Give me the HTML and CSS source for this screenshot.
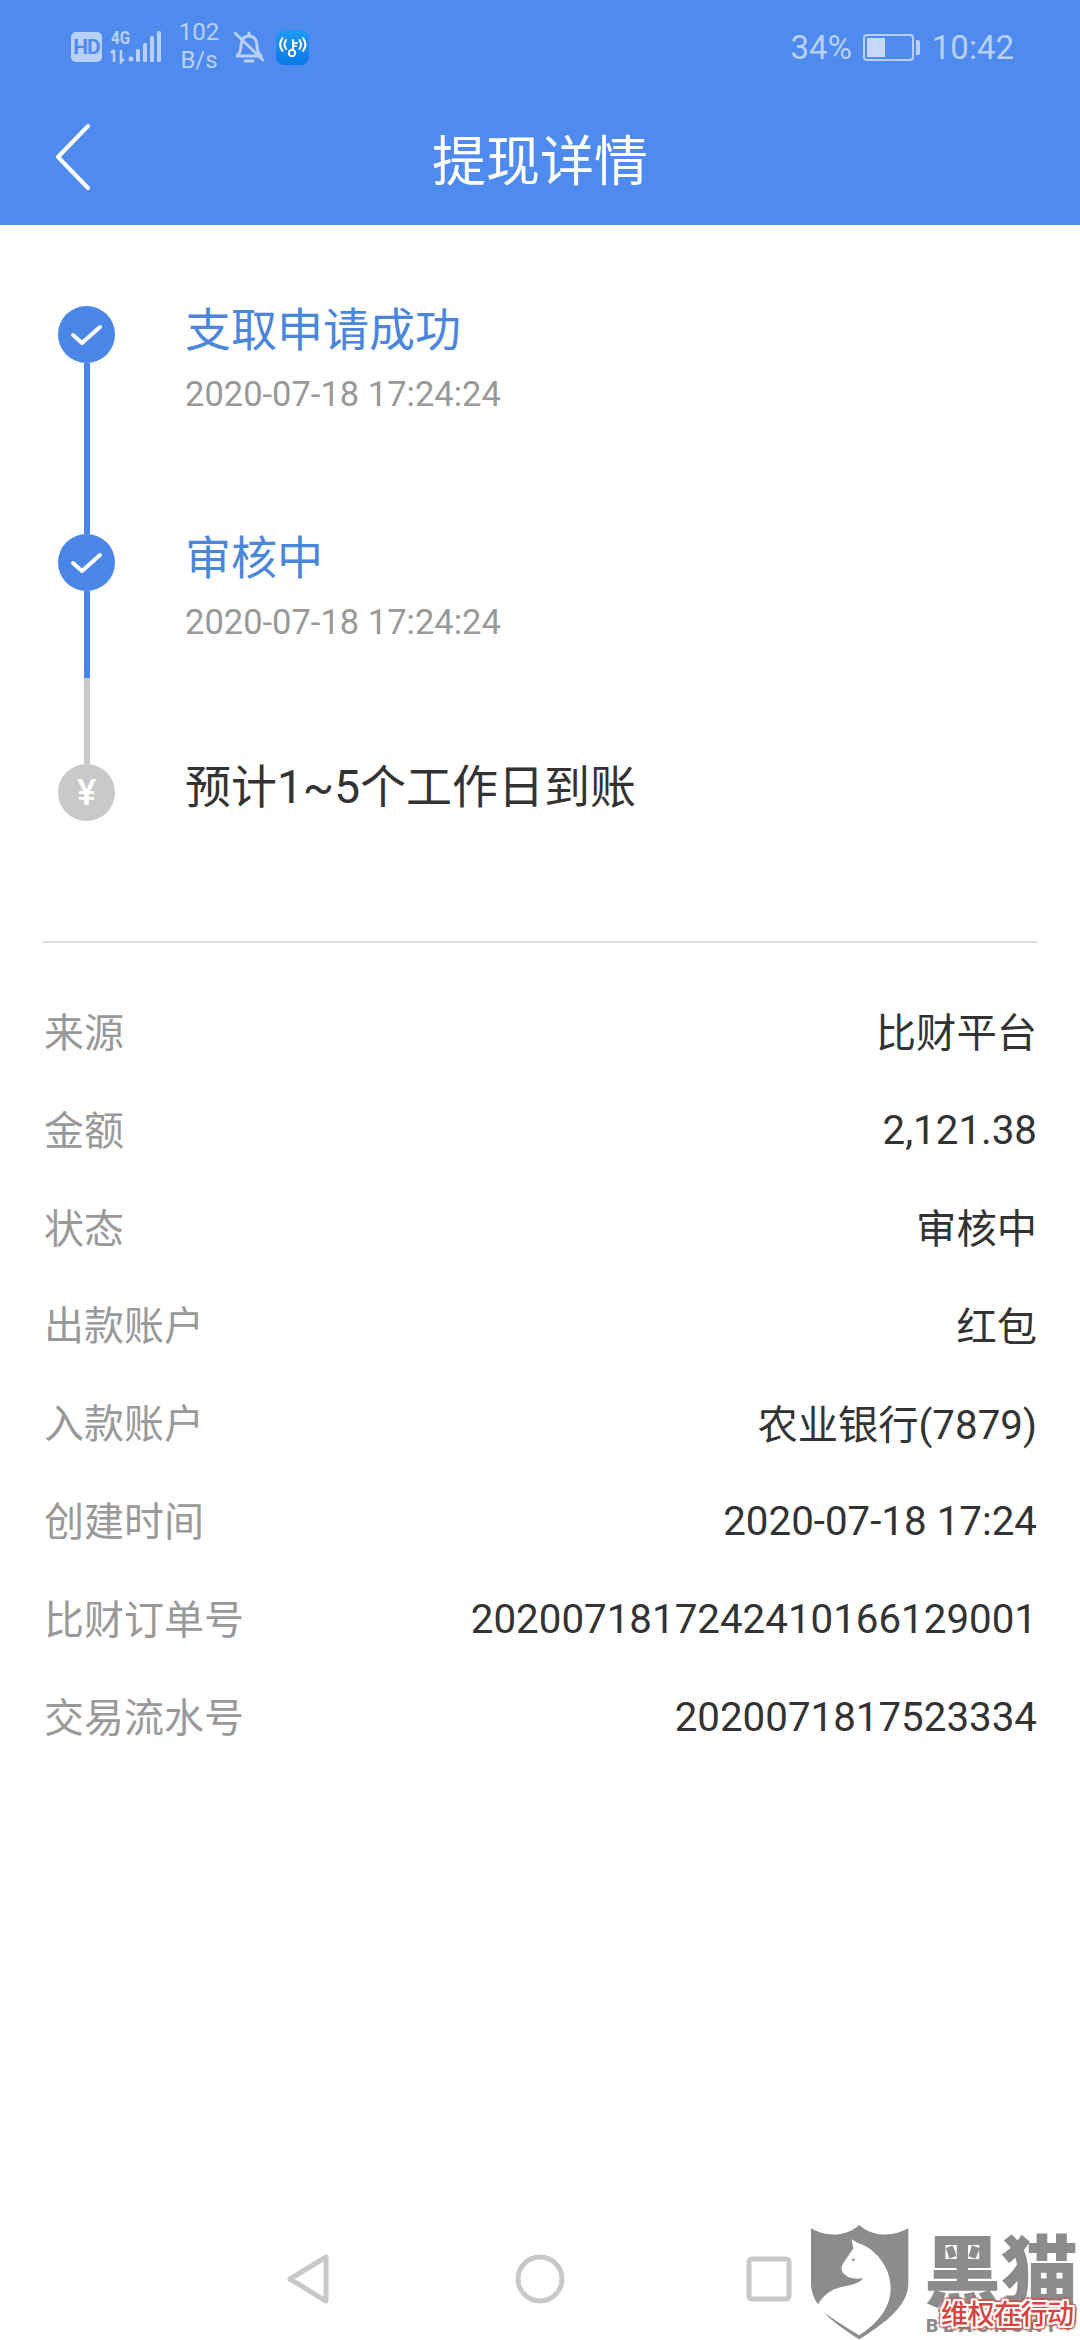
FILE: index.html
```html
<!DOCTYPE html>
<html lang="zh-CN">
<head>
<meta charset="utf-8">
<title>提现详情</title>
<link rel="stylesheet" href="styles.css">
</head>
<body>
<div class="page">
  <header class="header">
    <div class="status">
      <div class="status-left">
        <span class="hd">HD</span>
        <svg class="signal" width="54" height="34" viewBox="0 0 54 34">
          <text x="0" y="14" class="sig-text" textLength="19" lengthAdjust="spacingAndGlyphs">4G</text>
          <path class="sig-arrow" d="M3 20v12M0 23l3-3M10 20v12l3-3"/>
          <circle class="sig-fill" cx="20" cy="29" r="2.500"/>
          <rect class="sig-fill" x="25" y="19" width="4" height="13" rx="1.500"/>
          <rect class="sig-fill" x="32" y="13" width="4" height="19" rx="1.500"/>
          <rect class="sig-fill" x="39" y="6" width="4" height="26" rx="1.500"/>
          <rect class="sig-fill" x="46" y="1" width="4" height="31" rx="1.500"/>
        </svg>
        <div class="speed"><span>102</span><span>B/s</span></div>
        <svg class="bell" width="30" height="34" viewBox="0 0 30 34">
          <path class="bell-line" d="M3 26c3-3 4-5 4-10 0-6 3-10 8-10s8 4 8 10c0 5 1 7 4 10z"/>
          <path class="bell-line" d="M15 6V3M11 31h8M1 3l28 27"/>
        </svg>
        <svg class="wifi" width="33" height="35" viewBox="0 0 33 35">
          <defs>
            <linearGradient id="wifiBg" x1="0" y1="0" x2="0" y2="1">
              <stop offset="0" stop-color="#1f9bf5"/>
              <stop offset="1" stop-color="#0a78e6"/>
            </linearGradient>
          </defs>
          <rect width="33" height="35" rx="8" fill="url(#wifiBg)"/>
          <g class="wifi-line">
            <circle cx="16" cy="23" r="3.200"/>
            <path d="M17 20V10M17 13h4M17 16h3"/>
            <path d="M10 10c-2 3-2 6 0 9M6.500 8c-3 4-3 9 0 13M23.500 10c2 3 2 6 0 9M27 8c3 4 3 9 0 13"/>
          </g>
        </svg>
      </div>
      <div class="status-right">
        <span>34%</span>
        <div class="battery"><div class="battery-body"><div class="battery-level"></div></div><div class="battery-nub"></div></div>
        <span>10:42</span>
      </div>
    </div>
    <div class="titlebar">
      <svg class="back" width="40" height="70" viewBox="0 0 40 70">
        <path d="M34 3 4 34l30 31"/>
      </svg>
      <h1 class="title">提现详情</h1>
    </div>
  </header>

  <section class="timeline">
    <div class="step step-first">
      <div class="rail">
        <span class="node node-done"><svg width="34" height="26" viewBox="0 0 34 26"><path d="M3 13l9 8L30 5"/></svg></span>
        <span class="line line-blue"></span>
      </div>
      <div class="step-text">
        <div class="step-title">支取申请成功</div>
        <div class="step-date">2020-07-18 17:24:24</div>
      </div>
    </div>
    <div class="step step-second">
      <div class="rail">
        <span class="node node-done"><svg width="34" height="26" viewBox="0 0 34 26"><path d="M3 13l9 8L30 5"/></svg></span>
        <span class="line line-blue"></span>
        <span class="line line-gray"></span>
      </div>
      <div class="step-text">
        <div class="step-title">审核中</div>
        <div class="step-date">2020-07-18 17:24:24</div>
      </div>
    </div>
    <div class="step step-last">
      <div class="rail">
        <span class="node node-wait">¥</span>
      </div>
      <div class="step-text">
        <div class="step-pending">预计1~5个工作日到账</div>
      </div>
    </div>
  </section>

  <section class="details">
    <div class="row"><span class="label">来源</span><span class="value">比财平台</span></div>
    <div class="row"><span class="label">金额</span><span class="value value-num">2,121.38</span></div>
    <div class="row"><span class="label">状态</span><span class="value">审核中</span></div>
    <div class="row"><span class="label">出款账户</span><span class="value">红包</span></div>
    <div class="row"><span class="label">入款账户</span><span class="value">农业银行(7879)</span></div>
    <div class="row"><span class="label">创建时间</span><span class="value value-num">2020-07-18 17:24</span></div>
    <div class="row"><span class="label">比财订单号</span><span class="value value-num">2020071817242410166129001</span></div>
    <div class="row"><span class="label">交易流水号</span><span class="value value-num">2020071817523334</span></div>
  </section>

  <nav class="nav">
    <svg class="nav-icon" width="50" height="50" viewBox="0 0 50 50"><path d="M41 3 5 25l36 22z"/></svg>
    <svg class="nav-icon" width="50" height="50" viewBox="0 0 50 50"><circle cx="25" cy="25" r="22"/></svg>
    <svg class="nav-icon" width="50" height="50" viewBox="0 0 50 50"><rect x="4" y="5" width="40" height="40" rx="3"/></svg>
  </nav>

  <div class="watermark">
    <svg class="shield" width="280" height="130" viewBox="0 0 840 390">
      <path class="shield-bg" d="M33 55C70 78 135 85 178 45 220 85 285 78 325 55V225C320 295 245 345 178 388 110 345 38 295 33 225Z"/>
      <path class="shield-cat" d="M155 88 175 100C225 115 272 170 272 235 272 300 225 345 178 376 140 352 85 320 50 290 70 250 105 232 140 228 165 224 182 215 190 205 170 208 150 205 140 198 128 190 122 180 125 172 130 155 148 135 160 115Z"/>
      <path class="shield-eye" d="M152 150l14-6-4 10z"/>
    </svg>
    <div class="brand">黑猫</div>
    <div class="brand-en">BLACKCAT</div>
    <div class="stamp">维权在行动</div>
  </div>
</div>
</body>
</html>
```

FILE: styles.css
```css
* { box-sizing: border-box; margin: 0; padding: 0; }
html, body { background: #fff; }
body { font-family: Roboto, "Noto Sans CJK SC", sans-serif; }
.page {
  position: relative;
  width: 1080px;
  height: 2340px;
  display: flex;
  flex-direction: column;
  overflow: hidden;
  background: #fff;
}

/* header */
.header { height: 225px; background: #4f8bee; flex: none; }
.status {
  height: 94px;
  display: flex;
  justify-content: space-between;
  align-items: center;
  padding: 0 66px 0 71px;
  color: #b9d0f8;
}
.status-left { display: flex; align-items: center; }
.hd {
  width: 31px;
  height: 30px;
  border-radius: 5px;
  background: #b9d0f8;
  color: #4f8bee;
  font-size: 21px;
  font-weight: 700;
  letter-spacing: -1px;
  line-height: 30px;
  text-align: center;
}
.signal { margin-left: 9px; overflow: visible; }
.sig-text { font-family: Roboto, sans-serif; font-weight: 700; font-size: 18px; fill: #b9d0f8; }
.sig-arrow { fill: none; stroke: #b9d0f8; stroke-width: 2.500; }
.sig-fill { fill: #b9d0f8; }
.speed {
  display: flex;
  flex-direction: column;
  align-items: center;
  margin: -3px 0 0 14px;
  font-size: 24px;
  line-height: 28px;
  width: 40px;
}
.bell { margin-left: 15px; }
.bell-line { fill: none; stroke: #b9d0f8; stroke-width: 3; stroke-linejoin: round; stroke-linecap: round; }
.wifi { margin-left: 12px; }
.wifi-line { fill: none; stroke: #fff; stroke-width: 2; stroke-linecap: round; }
.status-right { display: flex; align-items: center; font-size: 33px; }
.battery { display: flex; align-items: center; margin: 0 12px 0 11px; }
.battery-body {
  width: 51px;
  height: 27px;
  border: 2px solid #b9d0f8;
  border-radius: 4px;
  padding: 2px;
}
.battery-level { width: 18px; height: 100%; background: #c6d9fa; }
.battery-nub { width: 4px; height: 15px; margin-left: 2px; background: #b9d0f8; border-radius: 0 2px 2px 0; }

.titlebar {
  position: relative;
  height: 131px;
  padding-top: 6px;
  display: flex;
  align-items: center;
  justify-content: center;
}
.back {
  position: absolute;
  left: 54px;
  top: 29px;
  fill: none;
  stroke: #fff;
  stroke-width: 4;
  stroke-linecap: round;
  stroke-linejoin: round;
}
.title { font-size: 54px; font-weight: 400; color: #fff; line-height: 70px; }

/* timeline */
.timeline { padding: 81px 0 0 58px; flex: none; }
.step { display: flex; }
.step-first { height: 228px; }
.step-second { height: 230px; }
.step-last { height: 177px; }
.rail { width: 57px; display: flex; flex-direction: column; align-items: center; flex: none; }
.node {
  width: 57px;
  height: 57px;
  border-radius: 50%;
  flex: none;
  display: flex;
  align-items: center;
  justify-content: center;
}
.node-done { background: #4a86e8; }
.node-done svg { fill: none; stroke: #fff; stroke-width: 4; stroke-linejoin: round; stroke-linecap: round; }
.node-wait { background: #c9c9c9; color: #fff; font-size: 36px; font-weight: 500; }
.line { width: 6px; flex: 1; }
.line-blue { background: #4a86e8; }
.line-gray { background: #c9c9c9; }
.step-text { margin-left: 70px; }
.step-title { font-size: 46px; line-height: 54px; color: #4a86dc; margin-top: -3px; }
.step-date { font-size: 34.500px; line-height: 42px; color: #999; margin-top: 16px; }
.step-pending { font-size: 46px; line-height: 54px; color: #333; margin-top: -4px; }

/* details */
.details {
  margin: 0 43px;
  padding-top: 38px;
  border-top: 2px solid #dddddd;
  flex: none;
}
.row {
  height: 97.850px;
  display: flex;
  align-items: center;
  justify-content: space-between;
  font-size: 40px;
}
.label { color: #999; margin-left: 1px; }
.value { color: #333; font-size: 40.300px; }
.value-num { padding-top: 5px; }

/* nav */
.nav {
  position: absolute;
  left: 285px;
  top: 2254px;
  display: flex;
  gap: 180px;
}
.nav-icon { fill: none; stroke: #c8c8c8; stroke-width: 5; stroke-linejoin: round; }

/* watermark overlay */
.watermark { position: absolute; left: 800px; top: 2210px; width: 280px; height: 130px; }
.shield { position: absolute; left: 0; top: 0; }
.shield-bg { fill: #8c8c8c; }
.shield-cat { fill: #fff; }
.shield-eye { fill: #8c8c8c; }
.brand {
  position: absolute;
  left: 124px;
  top: 12px;
  font-family: "Noto Sans CJK SC", sans-serif;
  font-size: 77px;
  font-weight: 900;
  line-height: 90px;
  color: #8c8c8c;
  white-space: nowrap;
}
.brand-en {
  position: absolute;
  left: 126px;
  top: 104px;
  width: 150px;
  font-size: 19px;
  font-weight: 900;
  letter-spacing: 5px;
  line-height: 24px;
  color: #8c8c8c;
  white-space: nowrap;
}
.stamp {
  position: absolute;
  left: 141px;
  top: 85px;
  font-family: "Noto Sans CJK SC", sans-serif;
  font-size: 27px;
  letter-spacing: -0.500px;
  line-height: 36px;
  font-weight: 500;
  color: #d8433e;
  white-space: nowrap;
  text-shadow:
    2px 0 0 #fff, -2px 0 0 #fff, 0 2px 0 #fff, 0 -2px 0 #fff,
    2px 2px 0 #fff, -2px -2px 0 #fff, 2px -2px 0 #fff, -2px 2px 0 #fff,
    4px 0 1px #bf5a53, -4px 0 1px #bf5a53, 0 4px 1px #bf5a53, 0 -4px 1px #bf5a53,
    3px 3px 1px #bf5a53, -3px -3px 1px #bf5a53, 3px -3px 1px #bf5a53, -3px 3px 1px #bf5a53;
}
```
